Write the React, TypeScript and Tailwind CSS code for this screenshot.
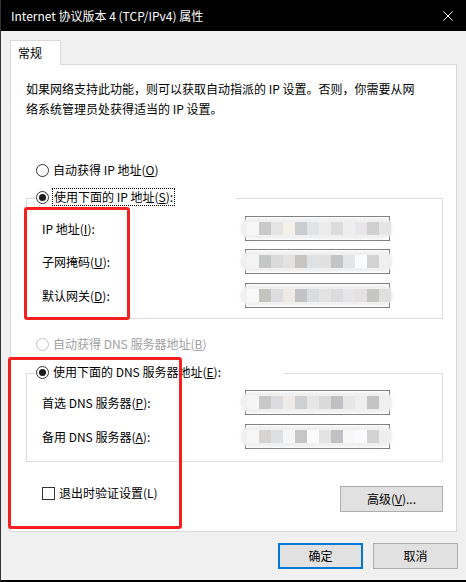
import React from 'react';

const shades = [
  ['#f7f7f7', '#c9c9c9', '#e4e4e4', '#f3f1ea', '#cacdd0', '#e0e4e7', '#ececec', '#dedcda', '#eceef0', '#e8e6e8', '#cfcfcf', '#e5e5e5'],
  ['#f4f4f4', '#c5c6c6', '#d9dadb', '#e3e2e0', '#c6c5c2', '#dfe2e5', '#e2e0de', '#c3c4c5', '#e4e5e7', '#fafbfc', '#d3d3d3', '#f0f0f0'],
  ['#f8f8f8', '#c3c4c0', '#dcdddf', '#efebe4', '#c2c3c4', '#d9dde0', '#e3e3e3', '#dcdcdc', '#e6e6e8', '#e3e1e1', '#c6c6c4', '#e0e0e0'],
  ['#f5f5f5', '#c8c8c8', '#dadcdf', '#efece7', '#cdd0d2', '#e6e6e6', '#dcdad8', '#bfc0c1', '#e6e6e6', '#eeeeee', '#c4c4c4', '#f0f0f0'],
  ['#f6f6f6', '#d5d4d2', '#dde0e3', '#f6f6f6', '#c6c6c6', '#fafafa', '#e3e3e3', '#c0c1c2', '#f7f7f7', '#fbfbfd', '#d2d2d2', '#eeeeee'],
];

function Blurred({ set }: { set: number }) {
  return (
    <div className="relative w-[145px] h-[25px] border border-[#7a7a7a] bg-white">
      <div className="absolute left-[-6px] right-[-4px] top-[1px] bottom-[1px] rounded-full bg-[#f0f0f0] blur-[1px]" />
      <div className="absolute left-[1px] top-[5px] flex blur-[0.4px]">
        {shades[set].map((c, i) => (
          <div key={i} className="w-[12px] h-[13px]" style={{ backgroundColor: c }} />
        ))}
      </div>
    </div>
  );
}

function Radio({ checked, disabled }: { checked?: boolean; disabled?: boolean }) {
  return (
    <div
      className={`w-[13px] h-[13px] rounded-full border bg-white flex items-center justify-center shrink-0 ${
        disabled ? 'border-[#c2c2c2]' : 'border-[#333333]'
      }`}
    >
      {checked && <div className="w-[7px] h-[7px] rounded-full bg-[#1b1b1b]" />}
    </div>
  );
}

function Field({ label, set }: { label: React.ReactNode; set: number }) {
  return (
    <div className="flex items-center h-[25px]">
      <div className="w-[203px]">{label}</div>
      <Blurred set={set} />
    </div>
  );
}

export default function App() {
  return (
    <div className="relative w-[466px] h-[582px] bg-[#f0f0f0] border-l border-[#333333] border-b-2 border-b-black text-[12px] leading-[20px] text-black font-['Noto_Sans_CJK_SC','Microsoft_YaHei',sans-serif] overflow-hidden">
      {/* title bar */}
      <div className="h-[31px] bg-black text-white flex items-center justify-between pl-[10px] pr-[12px]">
        <span>Internet 协议版本 4 (TCP/IPv4) 属性</span>
        <svg width="10" height="10" viewBox="0 0 10 10" className="mr-[1px]">
          <path d="M0.5 0.5 L9.5 9.5 M9.5 0.5 L0.5 9.5" stroke="white" strokeWidth="1" />
        </svg>
      </div>

      {/* tab */}
      <div className="pt-[9px] pl-[9px]">
        <div className="w-[51px] h-[25px] bg-white border border-b-0 border-[#d9d9d9] pl-[7px] leading-[24px] relative z-10 -mb-[1px]">
          常规
        </div>
      </div>

      {/* panel */}
      <div className="mx-[9px] h-[468px] bg-white border border-[#d9d9d9] flex flex-col">
        <p className="mt-[14px] pl-[15px]">
          如果网络支持此功能，则可以获取自动指派的 IP 设置。否则，你需要从网
          <br />
          络系统管理员处获得适当的 IP 设置。
        </p>

        <div className="mt-[41px] pl-[25px] h-[20px] flex items-center">
          <Radio />
          <span className="ml-[4px]">
            自动获得 IP 地址(<u>O</u>)
          </span>
        </div>

        {/* group 1 */}
        <div className="mt-[7px] ml-[15px] w-[417px]">
          <div className="flex h-[20px]">
            <div className="w-[9px] h-[9px] mt-[11px] border-t border-l border-[#dcdcdc]" />
            <div className="w-[201px] flex items-center pl-[1px]">
              <Radio checked />
              <span className="ml-[3px] px-[1px] leading-[16px] border border-dotted border-black">
                使用下面的 IP 地址(<u>S</u>):
              </span>
            </div>
            <div className="flex-1 h-[9px] mt-[11px] border-t border-r border-[#dcdcdc]" />
          </div>
          <div className="border-l border-r border-b border-[#dcdcdc] pl-[15px] pt-[9px] pb-[10px] flex flex-col">
            <Field label={<>IP 地址(<u>I</u>):</>} set={0} />
            <div className="mt-[8px]">
              <Field label={<>子网掩码(<u>U</u>):</>} set={1} />
            </div>
            <div className="mt-[9px]">
              <Field label={<>默认网关(<u>D</u>):</>} set={2} />
            </div>
          </div>
        </div>

        <div className="mt-[15px] pl-[25px] h-[20px] flex items-center text-[#a0a0a0]">
          <Radio disabled />
          <span className="ml-[4px]">
            自动获得 DNS 服务器地址(<u>B</u>)
          </span>
        </div>

        {/* group 2 */}
        <div className="mt-[8px] ml-[15px] w-[417px]">
          <div className="flex h-[20px]">
            <div className="w-[9px] h-[9px] mt-[11px] border-t border-l border-[#dcdcdc]" />
            <div className="w-[249px] flex items-center pl-[1px]">
              <Radio checked />
              <span className="ml-[4px]">
                使用下面的 DNS 服务器地址(<u>E</u>):
              </span>
            </div>
            <div className="flex-1 h-[9px] mt-[11px] border-t border-r border-[#dcdcdc]" />
          </div>
          <div className="border-l border-r border-b border-[#dcdcdc] pl-[15px] pt-[8px] pb-[12px] flex flex-col">
            <Field label={<>首选 DNS 服务器(<u>P</u>):</>} set={3} />
            <div className="mt-[9px]">
              <Field label={<>备用 DNS 服务器(<u>A</u>):</>} set={4} />
            </div>
          </div>
        </div>

        <div className="mt-[24px] pl-[31px] pr-[13px] flex items-start justify-between">
          <div className="flex items-center h-[14px]">
            <div className="w-[13px] h-[13px] border border-[#333333] bg-white" />
            <span className="ml-[4px]">退出时验证设置(L)</span>
          </div>
          <button className="w-[103px] h-[26px] bg-[#e1e1e1] border border-[#adadad] leading-[24px]">
            高级(<u>V</u>)...
          </button>
        </div>
      </div>

      {/* dialog buttons */}
      <div className="mt-[11px] pr-[8px] flex justify-end gap-[10px]">
        <button className="w-[85px] h-[26px] bg-[#e1e1e1] border-2 border-[#0078d7] leading-[22px]">确定</button>
        <button className="w-[85px] h-[26px] bg-[#e1e1e1] border border-[#adadad] leading-[24px]">取消</button>
      </div>

      {/* red annotation boxes */}
      <div className="absolute left-[23px] top-[207px] w-[106px] h-[113px] border-[3px] border-[#f41f1f] rounded-[3px]" />
      <div className="absolute left-[7px] top-[357px] w-[174px] h-[172px] border-[3px] border-[#f41f1f] rounded-[3px]" />
    </div>
  );
}
